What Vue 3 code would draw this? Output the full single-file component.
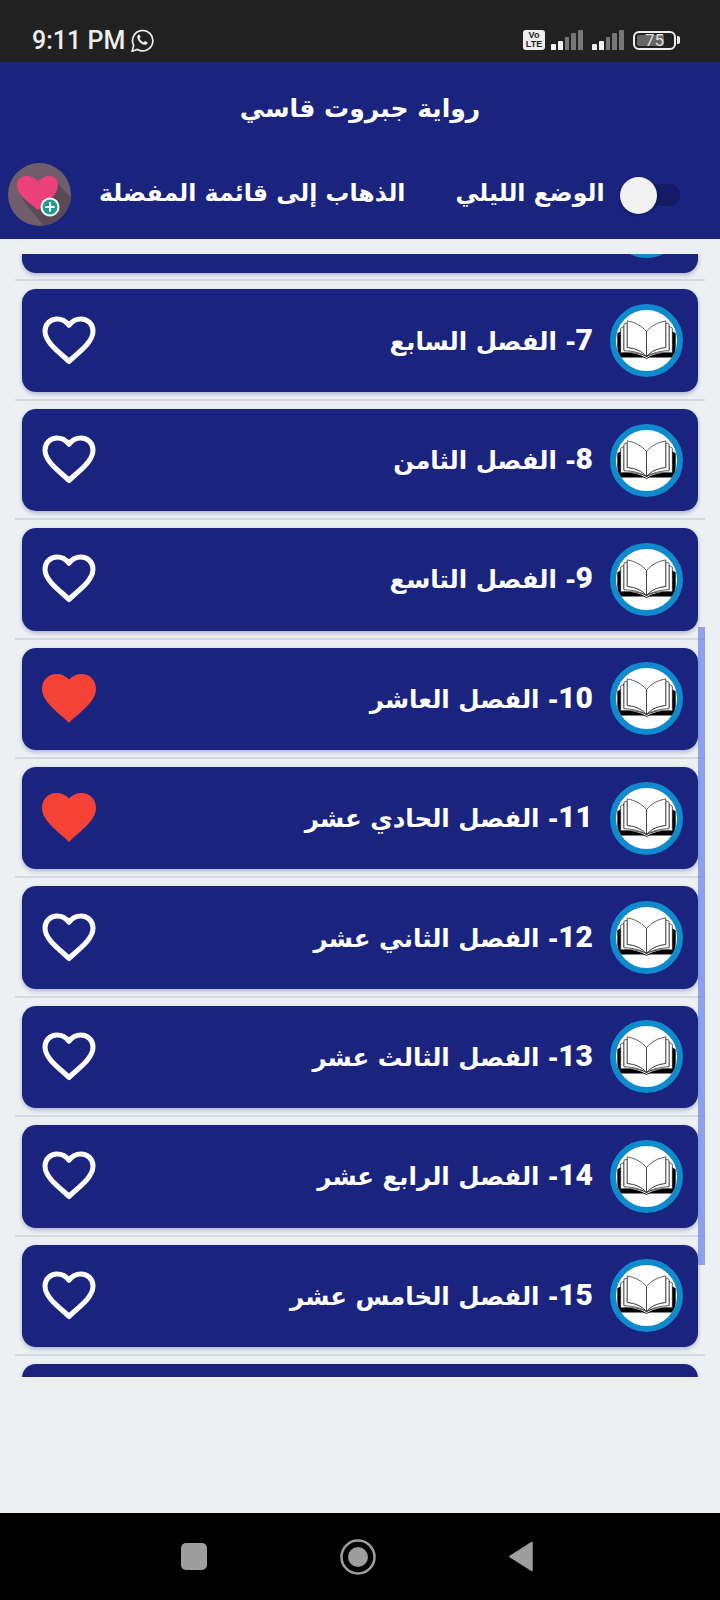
<template>
  <div class="screen">
    <!-- Status bar -->
    <div class="status-bar">
      <span class="clock">9:11 PM</span>
      <svg class="whatsapp" viewBox="1.500 1.500 21.500 21.500" fill="none">
        <path d="M2.500 22.300l1.500-5.500A9.500 9.500 0 1 1 7.600 20.600z" stroke="#eee" stroke-width="1.600" stroke-linejoin="round" />
        <path d="M8.900 6.900c-.5 0-1.300.5-1.500 1.600-.3 1.600.7 3.600 2.300 5.300 1.700 1.700 3.800 2.700 5.400 2.500 1.100-.2 1.800-1 1.800-1.700v-.6l-2.400-1.200-1 1.200c-1.800-.6-3.300-2-4-3.900l1-1.100-1-2.100z" fill="#eee" />
      </svg>
      <div class="status-right">
        <div class="volte"><span>Vo</span><span>LTE</span></div>
        <div v-for="s in 2" :key="s" class="signal">
          <i
            v-for="(h, i) in signalBars"
            :key="i"
            :class="{ on: i < 2 }"
            :style="{ height: h + 'px' }"
          ></i>
        </div>
        <div class="battery">
          <div class="battery-body">
            <div class="battery-fill"></div>
            <span>75</span>
          </div>
          <div class="battery-tip"></div>
        </div>
      </div>
    </div>

    <!-- Header -->
    <header class="app-header">
      <h1 class="title" dir="rtl">رواية جبروت قاسي</h1>
      <div class="header-row">
        <div class="fav-icon">
          <svg viewBox="0 0 63 63" width="63" height="63">
            <defs>
              <clipPath id="favClip"><circle cx="31.500" cy="31.500" r="31.500" /></clipPath>
            </defs>
            <circle cx="31.500" cy="31.500" r="31.500" fill="#6f5d6b" />
            <path clip-path="url(#favClip)" d="M46 16l20 22v25H36L14 36z" fill="#5a4a58" />
            <path d="M30 47C22 40 9 32 9 22 9 16 13.500 13 18.500 13c4.500 0 8.500 2 11.500 5.500C33 15 37 13 41 13c5 0 9 3 9 9C50 32 38 40 30 47z" fill="#ec407a" />
            <circle cx="42" cy="44" r="9.500" fill="#fff" />
            <circle cx="42" cy="44" r="7.500" fill="#1f9d8b" />
            <path d="M42 40v8M38 44h8" stroke="#fff" stroke-width="2" stroke-linecap="round" />
          </svg>
        </div>
        <span class="fav-label" dir="rtl">الذهاب إلى قائمة المفضلة</span>
        <span class="night-label" dir="rtl">الوضع الليلي</span>
        <div class="toggle"><div class="toggle-thumb"></div></div>
      </div>
    </header>

    <!-- Chapter list -->
    <div class="list-wrap">
      <div class="list">
        <div v-for="ch in chapters" :key="ch.num" class="item">
          <div class="card">
            <svg class="heart" viewBox="0 0 54 50" width="54" height="50">
              <path
                v-if="ch.fav"
                d="M27 49C20 41 0 29 0 15 0 6 6.500 0 14.500 0 19.500 0 24 2 27 5.500 30 2 34.500 0 39.500 0 47.500 0 54 6 54 15 54 29 34 41 27 49z"
                fill="#f44336"
              />
              <path
                v-else
                d="M27 45.500C20 38 3 27.500 3 15 3 8 8.500 3 15 3c4.800 0 9 2.200 12 6.300C30 5.200 34.200 3 39 3c6.500 0 12 5 12 12C51 27.500 34 38 27 45.500z"
                fill="none"
                stroke="#fff"
                stroke-width="5"
                stroke-linejoin="round"
              />
            </svg>
            <span class="chapter-name" dir="rtl"><b>{{ ch.num }}</b>- {{ ch.name }}</span>
            <div class="book">
              <svg viewBox="48 45 184 184" width="61" height="61">
                <path d="M52 115l12-7v67c28-3 56 3 76 15 20-12 48-18 76-15v-67l12 7v73h-78l-10 4-10-4H52z" fill="#000" />
                <path d="M62 100l10-6v72c26-2 52 4 68 19-18-9-50-14-78-11z" fill="#fff" stroke="#111" stroke-width="2" />
                <path d="M218 100l-10-6v72c-26-2-52 4-68 19 18-9 50-14 78-11z" fill="#fff" stroke="#111" stroke-width="2" />
                <path d="M72 88l10-4v74c22 2 44 10 58 27-16-10-44-17-68-17z" fill="#fff" stroke="#111" stroke-width="2" />
                <path d="M208 88l-10-4v74c-22 2-44 10-58 27 16-10 44-17 68-17z" fill="#fff" stroke="#111" stroke-width="2" />
                <path d="M140 110c-15-18-35-28-58-32v80c23 2 43 10 58 27z" fill="#fff" stroke="#111" stroke-width="2" />
                <path d="M140 110c15-18 35-28 58-32v80c-23 2-43 10-58 27z" fill="#fff" stroke="#111" stroke-width="2" />
              </svg>
            </div>
          </div>
        </div>
      </div>
    </div>

    <!-- Overlay scrollbar -->
    <div class="scroll-thumb"></div>

    <!-- Navigation bar -->
    <div class="nav-bar">
      <div class="nav-square"></div>
      <svg width="36" height="36" viewBox="0 0 36 36">
        <circle cx="18" cy="18" r="16.500" fill="none" stroke="#9e9e9e" stroke-width="2.500" />
        <circle cx="18" cy="18" r="10" fill="#9e9e9e" />
      </svg>
      <svg width="24" height="31" viewBox="0 0 24 31">
        <path d="M23 1.500v28L1 15.500z" fill="#9e9e9e" stroke="#9e9e9e" stroke-width="1.500" stroke-linejoin="round" />
      </svg>
    </div>
  </div>
</template>

<script setup>
const signalBars = [6, 9, 13, 17, 20]

const chapters = [
  { num: 6, name: 'الفصل السادس' },
  { num: 7, name: 'الفصل السابع' },
  { num: 8, name: 'الفصل الثامن' },
  { num: 9, name: 'الفصل التاسع' },
  { num: 10, name: 'الفصل العاشر', fav: true },
  { num: 11, name: 'الفصل الحادي عشر', fav: true },
  { num: 12, name: 'الفصل الثاني عشر' },
  { num: 13, name: 'الفصل الثالث عشر' },
  { num: 14, name: 'الفصل الرابع عشر' },
  { num: 15, name: 'الفصل الخامس عشر' },
  { num: 16, name: 'الفصل السادس عشر' }
]
</script>

<style>
html,
body {
  margin: 0;
  background: #ecf0f3;
}
</style>

<style scoped>
.screen {
  position: relative;
  width: 720px;
  height: 1600px;
  display: flex;
  flex-direction: column;
  overflow: hidden;
  background: #ecf0f3;
  font-family: "DejaVu Sans", sans-serif;
}

.status-bar {
  height: 62px;
  flex: none;
  box-sizing: border-box;
  padding: 29px 40px 0 32px;
  display: flex;
  align-items: flex-start;
  background: #212121;
  color: #eee;
}
.clock {
  font-family: Roboto, sans-serif;
  font-size: 25px;
  font-weight: 500;
  line-height: 24px;
}
.whatsapp {
  width: 23px;
  height: 23px;
  margin-left: 6px;
}
.status-right {
  margin-left: auto;
  display: flex;
  align-items: flex-end;
  height: 20px;
  margin-top: 1px;
}
.volte {
  width: 22px;
  height: 20px;
  margin-right: 6px;
  border-radius: 3px;
  background: #eee;
  color: #222;
  display: flex;
  flex-direction: column;
  align-items: center;
  justify-content: center;
  font-family: "Liberation Sans", sans-serif;
  font-size: 9px;
  font-weight: 700;
  line-height: 9px;
}
.signal {
  display: flex;
  align-items: flex-end;
  gap: 2px;
  margin-right: 9px;
}
.signal i {
  width: 4.800px;
  background: #777;
  border-radius: 1px 1px 0 0;
}
.signal i.on {
  background: #f2f2f2;
}
.battery {
  display: flex;
  align-items: center;
  height: 20px;
}
.battery-body {
  position: relative;
  width: 43px;
  height: 19px;
  box-sizing: border-box;
  border: 2px solid #eee;
  border-radius: 6px;
  display: flex;
  align-items: center;
  justify-content: center;
  color: #ddd;
  font-family: Roboto, sans-serif;
  font-size: 17px;
}
.battery-fill {
  position: absolute;
  left: 2px;
  top: 2px;
  bottom: 2px;
  width: 27px;
  border-radius: 2px;
  background: #666;
}
.battery-body span {
  position: relative;
}
.battery-tip {
  width: 3px;
  height: 8px;
  margin-left: 1px;
  border-radius: 0 2px 2px 0;
  background: #eee;
}

.app-header {
  height: 177px;
  flex: none;
  box-sizing: border-box;
  background: #1a237e;
  color: #fff;
  padding-top: 28px;
}
.title {
  margin: 0;
  text-align: center;
  font-size: 25px;
  font-weight: 700;
  line-height: 38px;
}
.header-row {
  display: flex;
  align-items: center;
  margin-top: 35px;
  padding-left: 8px;
}
.fav-icon {
  width: 63px;
  height: 63px;
  flex: none;
}
.fav-icon svg {
  display: block;
}
.fav-label,
.night-label {
  font-size: 23.700px;
  font-weight: 700;
  white-space: nowrap;
  padding-bottom: 3px;
}
.fav-label {
  margin-left: 28px;
}
.night-label {
  margin-left: 50px;
}
.toggle {
  position: relative;
  width: 60px;
  height: 22px;
  margin-left: 15px;
  border-radius: 11px;
  background: #141a66;
}
.toggle-thumb {
  position: absolute;
  left: 0;
  top: -7px;
  width: 37px;
  height: 37px;
  border-radius: 50%;
  background: #f1f1f1;
  box-shadow: 0 1px 3px rgba(0, 0, 0, 0.4);
}

.list-wrap {
  height: 1123px;
  flex: none;
  margin-top: 15px;
  overflow: hidden;
}
.list {
  margin-top: -92px;
}
.item {
  height: 119.400px;
  box-sizing: border-box;
  margin: 0 15px;
  padding: 8px 7px 0;
  border-bottom: 2px solid #d6d8dd;
}
.card {
  height: 102.500px;
  box-sizing: border-box;
  padding: 0 15px 0 20px;
  display: flex;
  align-items: center;
  border-radius: 14px;
  background: #1a237e;
  box-shadow: 0 2px 4px rgba(26, 35, 126, 0.3);
  color: #fff;
}
.heart {
  flex: none;
}
.chapter-name {
  margin-left: auto;
  margin-right: 17px;
  padding-bottom: 3px;
  font-size: 24.500px;
  font-weight: 700;
  white-space: nowrap;
}
.chapter-name b {
  font-family: Roboto, sans-serif;
  font-size: 30px;
}
.book {
  width: 73px;
  height: 73px;
  flex: none;
  box-sizing: border-box;
  border: 6px solid #0f8bcd;
  border-radius: 50%;
  background: #fff;
  overflow: hidden;
}
.book svg {
  display: block;
}

.scroll-thumb {
  position: absolute;
  left: 698px;
  top: 627px;
  width: 7px;
  height: 638px;
  background: rgba(92, 118, 232, 0.65);
}

.nav-bar {
  margin-top: auto;
  height: 87px;
  flex: none;
  box-sizing: border-box;
  padding-right: 7px;
  display: flex;
  align-items: center;
  justify-content: center;
  gap: 133px;
  background: #000;
}
.nav-square {
  width: 26px;
  height: 27px;
  border-radius: 5px;
  background: #9e9e9e;
}
</style>
